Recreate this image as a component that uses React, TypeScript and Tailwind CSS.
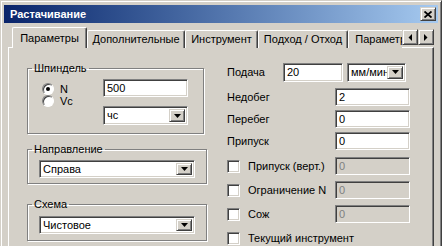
import type { ReactNode } from "react";

const sunken =
  "border border-t-[#808080] border-l-[#808080] border-b-white border-r-white shadow-[inset_1px_1px_0_#404040,inset_-1px_-1px_0_#d4d0c8]";
const raised =
  "border border-t-[#d4d0c8] border-l-[#d4d0c8] border-b-[#404040] border-r-[#404040] shadow-[inset_1px_1px_0_#ffffff,inset_-1px_-1px_0_#808080]";

function Arrow({ dir = "down" }: { dir?: "down" | "left" | "right" }) {
  if (dir === "left")
    return (
      <svg width="4" height="7" viewBox="0 0 4 7">
        <polygon points="4,0 4,7 0.5,3.5" fill="#000" />
      </svg>
    );
  if (dir === "right")
    return (
      <svg width="4" height="7" viewBox="0 0 4 7">
        <polygon points="0,0 0,7 3.5,3.5" fill="#000" />
      </svg>
    );
  return (
    <svg width="7" height="4" viewBox="0 0 7 4">
      <polygon points="0,0 7,0 3.5,4" fill="#000" />
    </svg>
  );
}

function TextBox({
  value,
  className,
  disabled,
}: {
  value: string;
  className: string;
  disabled?: boolean;
}) {
  return (
    <div
      className={`${sunken} ${className} flex items-center pl-[3px] ${
        disabled ? "bg-[#d4d0c8] text-[#808080]" : "bg-white text-black"
      }`}
    >
      {value}
    </div>
  );
}

function Combo({ value, className }: { value: string; className: string }) {
  return (
    <div className={`${sunken} ${className} flex items-stretch bg-white p-[2px]`}>
      <div className="flex flex-1 items-center overflow-hidden whitespace-nowrap pl-[1px]">
        {value}
      </div>
      <div className={`${raised} flex w-[16px] items-center justify-center bg-[#d4d0c8]`}>
        <Arrow />
      </div>
    </div>
  );
}

function Radio({ checked }: { checked?: boolean }) {
  return (
    <div className="flex h-[12px] w-[12px] items-center justify-center rounded-full border border-t-[#808080] border-l-[#808080] border-b-white border-r-white bg-white shadow-[inset_1px_1px_0_#404040]">
      {checked && <div className="h-[4px] w-[4px] rounded-full bg-black" />}
    </div>
  );
}

function Check({ label }: { label: string }) {
  return (
    <div className="flex items-center gap-[8px]">
      <div className={`${sunken} h-[13px] w-[13px] bg-white`} />
      <span>{label}</span>
    </div>
  );
}

function Group({
  title,
  className,
  children,
}: {
  title: string;
  className: string;
  children: ReactNode;
}) {
  return (
    <fieldset
      className={`border border-[#808080] shadow-[1px_1px_0_#ffffff,inset_1px_1px_0_#ffffff] ${className}`}
    >
      <legend className="ml-[4px] px-[2px] leading-[13px]">{title}</legend>
      {children}
    </fieldset>
  );
}

function Row({ label, children }: { label: string; children: ReactNode }) {
  return (
    <div className="flex h-[22px] items-center justify-between">
      <span>{label}</span>
      {children}
    </div>
  );
}

function CheckRow({ label, value }: { label: string; value: string }) {
  return (
    <div className="flex h-[24px] items-center justify-between">
      <Check label={label} />
      <TextBox value={value} disabled className="h-[18px] w-[75px]" />
    </div>
  );
}

const tabs = [
  { label: "Параметры", w: "w-[75px]" },
  { label: "Дополнительные", w: "w-[98px]" },
  { label: "Инструмент", w: "w-[73px]" },
  { label: "Подход / Отход", w: "w-[90px]" },
  { label: "Параметры строки", w: "w-[110px]" },
];

export default function App() {
  return (
    <div className="h-[246px] w-[448px] overflow-hidden bg-white font-['Liberation_Sans',Arial,sans-serif] text-[11px] text-black">
      <div className="h-[260px] w-[442px] border border-t-[#d4d0c8] border-l-[#d4d0c8] border-r-[#404040] bg-[#d4d0c8] shadow-[inset_1px_1px_0_#ffffff,inset_-1px_0_0_#808080]">
        <div className="px-[3px] pt-[4px]">
          <div className="flex h-[18px] items-center justify-between bg-linear-to-r from-[#0a246a] to-[#a6caf0] pl-[6px] pr-[2px]">
            <span className="font-bold text-white">Растачивание</span>
            <div className={`${raised} flex h-[14px] w-[16px] items-center justify-center bg-[#d4d0c8]`}>
              <svg width="8" height="7" viewBox="0 0 8 7">
                <path d="M0.5 0.5 L7.5 6.5 M7.5 0.5 L0.5 6.5" stroke="#000" strokeWidth="1.8" />
              </svg>
            </div>
          </div>
        </div>

        <div className="mt-[4px] flex h-[20px] items-end pl-[11px] pr-[7px]">
          <div className="flex h-[21px] flex-1 items-end self-start overflow-hidden">
            {tabs.map((t, i) => (
              <div
                key={t.label}
                className={`${t.w} flex shrink-0 items-center justify-center rounded-t-[2px] border-t border-l border-r border-t-white border-l-white border-r-[#404040] bg-[#d4d0c8] shadow-[inset_-1px_0_0_#808080] whitespace-nowrap ${
                  i === 0 ? "relative z-10 h-[21px]" : "h-[18px]"
                }`}
              >
                {t.label}
              </div>
            ))}
          </div>
          <div className="mb-[2px] flex">
            <div className={`${raised} flex h-[16px] w-[16px] items-center justify-center bg-[#d4d0c8]`}>
              <Arrow dir="left" />
            </div>
            <div className={`${raised} flex h-[16px] w-[16px] items-center justify-center bg-[#d4d0c8]`}>
              <Arrow dir="right" />
            </div>
          </div>
        </div>

        <div className="mx-[7px] flex h-[220px] border-t border-l border-r border-t-white border-l-white border-r-[#404040] shadow-[inset_-1px_0_0_#808080] pl-[18px] pt-[14px]">
          <div className="flex w-[177px] flex-col">
            <Group title="Шпиндель" className="h-[72px]">
              <div className="flex pl-[14px] pt-[4px]">
                <div className="flex w-[61px] flex-col pt-[4px]">
                  <div className="flex h-[12px] items-center gap-[6px]">
                    <Radio checked />
                    <span>N</span>
                  </div>
                  <div className="flex h-[12px] items-center gap-[6px]">
                    <Radio />
                    <span>Vc</span>
                  </div>
                </div>
                <div className="flex flex-col gap-[9px]">
                  <TextBox value="500" className="h-[18px] w-[85px]" />
                  <Combo value="чс" className="h-[19px] w-[85px]" />
                </div>
              </div>
            </Group>
            <Group title="Направление" className="mt-[9px] h-[41px]">
              <div className="px-[11px] pt-[4px]">
                <Combo value="Справа" className="h-[18px] w-[156px]" />
              </div>
            </Group>
            <Group title="Схема" className="mt-[14px] h-[43px]">
              <div className="px-[11px] pt-[5px]">
                <Combo value="Чистовое" className="h-[18px] w-[156px]" />
              </div>
            </Group>
          </div>

          <div className="ml-[23px] flex w-[183px] flex-col">
            <div className="flex h-[20px] items-center">
              <span className="w-[56px]">Подача</span>
              <TextBox value="20" className="h-[19px] w-[60px]" />
              <Combo value="мм/мин" className="ml-[4px] h-[19px] w-[59px]" />
            </div>
            <div className="mt-[4px] flex flex-col">
              <Row label="Недобег">
                <TextBox value="2" className="h-[18px] w-[75px]" />
              </Row>
              <Row label="Перебег">
                <TextBox value="0" className="h-[18px] w-[75px]" />
              </Row>
              <Row label="Припуск">
                <TextBox value="0" className="h-[18px] w-[75px]" />
              </Row>
            </div>
            <div className="mt-[2px] flex flex-col">
              <CheckRow label="Припуск (верт.)" value="0" />
              <CheckRow label="Ограничение N" value="0" />
              <CheckRow label="Сож" value="0" />
              <div className="flex h-[24px] items-center">
                <Check label="Текущий инструмент" />
              </div>
            </div>
          </div>
        </div>
      </div>
    </div>
  );
}
